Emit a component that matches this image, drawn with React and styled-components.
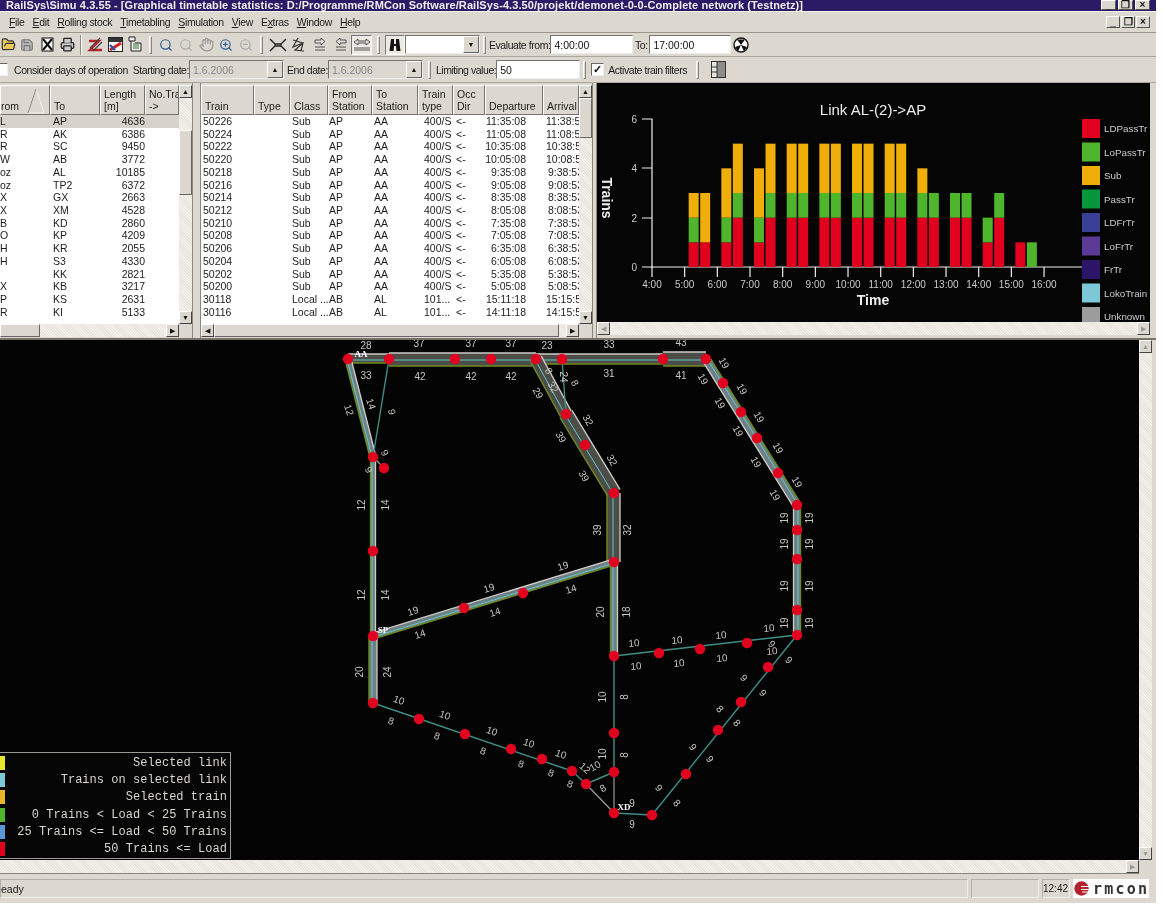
import React from 'react';
import styled, { createGlobalStyle } from 'styled-components';
import { FolderOpen, Save, Printer, Search, ZoomIn, ZoomOut, Hand } from 'lucide-react';

const GlobalStyle = createGlobalStyle`
  html, body { margin: 0; padding: 0; background: #fff; }
  * { box-sizing: border-box; }
`;

const Desktop = styled.div`
  width: 1156px;
  height: 903px;
  display: flex;
  flex-direction: column;
  overflow: hidden;
  background: #dcd8cf;
  color: #1c1c1c;
  font-family: "Liberation Sans", Arial, sans-serif;
  font-size: 10.5px;
  filter: blur(0.35px);
`;

const TitleBar = styled.div`
  height: 11px;
  flex: none;
  display: flex;
  align-items: flex-end;
  justify-content: space-between;
  overflow: hidden;
  background: #2b1a66;
  color: #eee;
  font-weight: 700;
  font-size: 11px;
  letter-spacing: 0.08px;
  white-space: nowrap;
  padding: 0 6px 0 6px;
`;

const WinButtons = styled.div`
  display: flex;
  gap: ${p => (p.$top ? '2px' : '1px')};
  align-self: ${p => (p.$top ? 'flex-start' : 'center')};
`;

const WinBtn = styled.div`
  width: ${p => (p.$top ? '15px' : '14px')};
  height: ${p => (p.$top ? '10px' : '12px')};
  background: #dcd8cf;
  color: #111;
  border: 1px solid;
  border-color: #fff #555 #555 #fff;
  font-size: 10px;
  line-height: ${p => (p.$top ? '8px' : '10px')};
  font-weight: 700;
  text-align: center;
`;

const MenuBar = styled.div`
  height: 22px;
  flex: none;
  display: flex;
  align-items: center;
  justify-content: space-between;
  padding: 0 6px 0 9px;
  border-top: 1px solid #f4f2ec;
  border-bottom: 1px solid #9a968c;
`;

const Menus = styled.div`
  display: flex;
  gap: 8px;
  letter-spacing: -0.35px;
  u { text-decoration: underline; }
`;

const Toolbar = styled.div`
  height: ${p => p.$h}px;
  flex: none;
  display: flex;
  align-items: center;
  white-space: nowrap;
  border-bottom: 1px solid #aaa69c;
`;

const Tool = styled.div`
  width: ${p => p.$w || 20}px;
  height: 20px;
  flex: none;
  display: flex;
  align-items: center;
  justify-content: center;
  ${p => p.$pressed && 'border: 1px solid; border-color: #777 #fff #fff #777; background: #eceae3;'}
`;

const Grip = styled.div`
  width: 3px;
  height: 18px;
  flex: none;
  margin: 0 ${p => p.$m || 5}px;
  border: 1px solid;
  border-color: #fff #8a867c #8a867c #fff;
`;

const Sep = styled.div`
  width: 2px;
  height: 20px;
  flex: none;
  margin: 0 3px;
  border-left: 1px solid #8a867c;
  border-right: 1px solid #fff;
`;

const Label = styled.span`
  flex: none;
  width: ${p => (p.$w ? `${p.$w}px` : 'auto')};
  text-align: ${p => p.$align || 'left'};
  margin-left: ${p => p.$ml || 0}px;
  letter-spacing: -0.45px;
`;

const Field = styled.div`
  width: ${p => p.$w}px;
  height: 19px;
  flex: none;
  display: flex;
  align-items: center;
  justify-content: space-between;
  padding-left: 3px;
  background: ${p => (p.$off ? '#dcd8cf' : '#fff')};
  color: ${p => (p.$off ? '#888' : '#111')};
  border: 1px solid;
  border-color: #77736a #eee #eee #77736a;
`;

const SpinBtn = styled.div`
  width: 16px;
  height: 17px;
  background: #dcd8cf;
  border: 1px solid;
  border-color: #fff #666 #666 #fff;
  color: #111;
  font-size: 7px;
  line-height: 15px;
  text-align: center;
`;

const Check = styled.div`
  width: 13px;
  height: 13px;
  flex: none;
  margin-left: ${p => p.$ml || 0}px;
  background: #fff;
  border: 1px solid;
  border-color: #666 #eee #eee #666;
  color: #111;
  font-size: 11px;
  line-height: 10px;
  font-weight: 700;
  text-align: center;
`;

const Panels = styled.div`
  height: 257px;
  flex: none;
  display: flex;
  border-bottom: 2px solid #77736a;
`;

const Splitter = styled.div`
  width: ${p => p.$w}px;
  flex: none;
  border-left: 1px solid #8a867c;
  border-right: 1px solid #8a867c;
`;

const TablePane = styled.div`
  width: ${p => p.$w}px;
  flex: none;
  display: grid;
  grid-template-columns: 1fr 13px;
  grid-template-rows: 1fr 13px;
  height: 252px;
  margin-top: 2px;
`;

const TableBody = styled.div`
  overflow: hidden;
  background: #fff;
`;

const HeadRow = styled.div`
  display: grid;
  grid-template-columns: ${p => p.$cols};
  height: 30px;
`;

const HeadCell = styled.div`
  display: flex;
  align-items: flex-end;
  position: relative;
  padding: 0 ${p => (p.$flush ? '0' : '3px')} 2px ${p => (p.$flush ? '0' : '3px')};
  line-height: 12px;
  background: #dcd8cf;
  border: 1px solid;
  border-color: #fff #77736a #77736a #fff;
  overflow: hidden;
  white-space: pre-line;
`;

const SortMark = styled.svg`
  position: absolute;
  right: 3px;
  top: 2px;
`;

const Row = styled.div`
  display: grid;
  grid-template-columns: ${p => p.$cols};
  height: 12.73px;
  line-height: 12.73px;
  background: ${p => (p.$sel ? '#d7d3ca' : 'transparent')};
`;

const Cell = styled.div`
  overflow: hidden;
  white-space: nowrap;
  text-align: ${p => p.$align || 'left'};
  padding: ${p => p.$pad || '0 0 0 2px'};
`;

const dither = 'repeating-linear-gradient(45deg, #f2f0ea 0 1px, #e8e5de 1px 2px)';

const ScrollTrack = styled.div`
  display: flex;
  flex-direction: ${p => (p.$h ? 'row' : 'column')};
  justify-content: space-between;
  background-image: ${dither};
  min-width: 0;
  min-height: 0;
`;

const Arrow = styled.div`
  width: 13px;
  height: 13px;
  flex: none;
  background: #dcd8cf;
  border: 1px solid;
  border-color: #fff #444 #444 #fff;
  color: ${p => (p.$dim ? '#999' : '#111')};
  font-size: 7px;
  line-height: 11px;
  text-align: center;
`;

const Thumb = styled.div`
  flex: none;
  width: ${p => p.$w || '100%'};
  height: ${p => p.$len || '100%'};
  margin: ${p => p.$m || 0};
  background: #dcd8cf;
  border: 1px solid;
  border-color: #fff #666 #666 #fff;
`;

const Corner = styled.div`
  background: #dcd8cf;
`;

const ChartPane = styled.div`
  flex: none;
  width: 553px;
  display: flex;
  flex-direction: column;
`;

const ChartCanvas = styled.svg`
  display: block;
  flex: none;
  background: #050505;
`;

const MapRow = styled.div`
  height: 520px;
  flex: none;
  display: flex;
`;

const MapCanvas = styled.div`
  width: 1139px;
  flex: none;
  position: relative;
  background: #040404;
  overflow: hidden;
`;

const MapSvg = styled.svg`
  display: block;
`;

const MapLegend = styled.div`
  position: absolute;
  left: 0;
  bottom: 1px;
  width: 231px;
  height: 107px;
  padding-top: 1px;
  background: #060606;
  border: 1px solid #9c9a94;
  border-left: none;
  display: flex;
  flex-direction: column;
`;

const LegendRow = styled.div`
  height: 17.3px;
  display: flex;
  align-items: center;
  justify-content: space-between;
  padding-right: 3px;
  font-family: "Liberation Mono", "Courier New", monospace;
  font-size: 12px;
  letter-spacing: 0.03px;
  color: #d8d6d0;
  white-space: pre;
`;

const Swatch = styled.div`
  width: 5px;
  height: 14px;
  background: ${p => p.$c};
`;

const BottomScroll = styled.div`
  height: 14px;
  flex: none;
  width: 1139px;
  display: flex;
  justify-content: flex-end;
  background-image: ${dither};
  border-bottom: 1px solid #8a867c;
`;

const StatusBar = styled.div`
  flex: 1;
  display: flex;
  gap: 3px;
  align-items: stretch;
  padding: 5px 7px 5px 0;
`;

const StatusCell = styled.div`
  width: ${p => (p.$w ? `${p.$w}px` : 'auto')};
  flex: ${p => (p.$w ? 'none' : 1)};
  display: flex;
  align-items: center;
  border: 1px solid;
  border-color: #b4b0a6 #f0eee8 #f0eee8 #b4b0a6;
  font-size: ${p => (p.$small ? '10px' : '10.5px')};
`;

const Logo = styled.div`
  width: 76px;
  flex: none;
  background: #fff;
  display: flex;
  align-items: center;
  gap: 3px;
  padding-left: 1px;
`;

const LogoText = styled.span`
  font-family: "DejaVu Sans Mono", monospace;
  font-weight: 700;
  font-size: 15px;
  letter-spacing: 2.2px;
  color: #333;
`;

const leftCols = '50px 50px 45px 34px';
const midCols = '53px 36px 38px 44px 46px 35px 32px 58px 36px';

const leftRows = [
  ['L', 'AP', '4636'], ['R', 'AK', '6386'], ['R', 'SC', '9450'], ['W', 'AB', '3772'],
  ['oz', 'AL', '10185'], ['oz', 'TP2', '6372'], ['X', 'GX', '2663'], ['X', 'XM', '4528'],
  ['B', 'KD', '2860'], ['O', 'KP', '4209'], ['H', 'KR', '2055'], ['H', 'S3', '4330'],
  ['', 'KK', '2821'], ['X', 'KB', '3217'], ['P', 'KS', '2631'], ['R', 'KI', '5133'],
];

const subTrains = [
  ['50226', '11:35:08', '11:38:53'], ['50224', '11:05:08', '11:08:53'],
  ['50222', '10:35:08', '10:38:53'], ['50220', '10:05:08', '10:08:53'],
  ['50218', '9:35:08', '9:38:53'], ['50216', '9:05:08', '9:08:53'],
  ['50214', '8:35:08', '8:38:53'], ['50212', '8:05:08', '8:08:53'],
  ['50210', '7:35:08', '7:38:53'], ['50208', '7:05:08', '7:08:53'],
  ['50206', '6:35:08', '6:38:53'], ['50204', '6:05:08', '6:08:53'],
  ['50202', '5:35:08', '5:38:53'], ['50200', '5:05:08', '5:08:53'],
];

// [red, green, yellow] for the two bars of each hour, from 5:00 on
const hours = [
  [[1, 1, 1], [1, 0, 2]], [[1, 1, 2], [2, 1, 2]], [[1, 1, 2], [2, 1, 2]], [[2, 1, 2], [2, 1, 2]],
  [[2, 1, 2], [2, 1, 2]], [[2, 1, 2], [2, 1, 2]], [[2, 1, 2], [2, 1, 2]], [[2, 1, 1], [2, 1, 0]],
  [[2, 1, 0], [2, 1, 0]], [[1, 1, 0], [2, 1, 0]], [[1, 0, 0], [0, 1, 0]],
];

const legendItems = [
  ['LDPassTr', '#e2001f'], ['LoPassTr', '#4fb52c'], ['Sub', '#efae0a'], ['PassTr', '#07963c'],
  ['LDFrTr', '#3a3f96'], ['LoFrTr', '#5a3a94'], ['FrTr', '#2c1468'], ['LokoTrain', '#7cc8d8'], ['Unknown', '#9c9c9c'],
];

function Chart() {
  const x0 = 55;
  const hw = 32.67;
  const unit = 24.67;
  const base = 184;
  const stack = (vals, x, key) => {
    let y = base;
    return vals.map((v, i) => {
      y -= v * unit;
      return v ? <rect key={key + i} x={x} y={y} width={10} height={v * unit} fill={['#e2001f', '#4fb52c', '#efae0a'][i]} /> : null;
    });
  };
  return (
    <ChartCanvas width={553} height={239} viewBox="0 0 553 239">
      <text x={276} y={32} fill="#eee" fontSize={15} textAnchor="middle" fontFamily="Liberation Sans">Link AL-(2)-&gt;AP</text>
      <text transform="translate(5 115) rotate(90)" fill="#eee" fontSize={14} fontWeight={700} textAnchor="middle" fontFamily="Liberation Sans">Trains</text>
      <text x={276} y={222} fill="#eee" fontSize={14} fontWeight={700} textAnchor="middle" fontFamily="Liberation Sans">Time</text>
      <path d={`M${x0 - 10} 36H${x0}V${base + 1}M${x0 - 10} 85H${x0}M${x0 - 10} 135H${x0}M${x0 - 10} ${base}H${x0 + 430}`} stroke="#eee" strokeWidth={1.2} fill="none" />
      {[[6, 36], [4, 85], [2, 135], [0, 184]].map(([t, y]) => (
        <text key={t} x={x0 - 15} y={y + 4} fill="#ccc" fontSize={10} textAnchor="end" fontFamily="Liberation Sans">{t}</text>
      ))}
      {Array.from({ length: 13 }, (_, i) => (
        <g key={i}>
          <path d={`M${x0 + i * hw} ${base}v10`} stroke="#eee" strokeWidth={1.2} />
          <text x={x0 + i * hw} y={205} fill="#ccc" fontSize={10} textAnchor="middle" fontFamily="Liberation Sans">{i + 4}:00</text>
        </g>
      ))}
      {hours.map((h, i) => (
        <g key={i}>
          {stack(h[0], x0 + (i + 1) * hw + 4, `a${i}`)}
          {stack(h[1], x0 + (i + 1) * hw + 15.5, `b${i}`)}
        </g>
      ))}
      {legendItems.map(([name, c], i) => (
        <g key={name}>
          <rect x={485} y={36 + i * 23.5} width={18} height={19} fill={c} />
          <text x={507} y={49 + i * 23.5} fill="#ccc" fontSize={9.8} fontFamily="Liberation Sans">{name}</text>
        </g>
      ))}
    </ChartCanvas>
  );
}

// lines: from, to, half widths towards "white" side and "olive" side
const thick = [
  [[348, 359], [389, 359], 5, 4], [[389, 359], [536, 359], 6, 7], [[536, 359], [663, 359], 5, 5],
  [[663, 359], [706, 359], 7, 7], [[536, 359], [566, 414], 6, 6], [[566, 414], [614, 493], 7, 7],
  [[614, 493], [614, 562], 6, 7], [[348, 359], [373, 457], 3, 3], [[373, 457], [373, 636], 2.5, 2.5],
  [[373, 636], [614, 562], 3, 3], [[373, 636], [373, 703], 4, 4], [[614, 562], [614, 656], 3.5, 3.5],
  [[797, 505], [706, 359], 4, 4], [[797, 635], [797, 505], 3.5, 3.5],
];

const thin = [
  [[389, 359], [373, 457]], [[562, 359], [566, 414]], [[373, 703], [572, 771]], [[572, 771], [586, 784]],
  [[586, 784], [614, 772]], [[614, 656], [614, 772]], [[614, 813], [652, 815]], [[652, 815], [797, 635]],
  [[614, 656], [797, 635]],
];

const greyThin = [[[614, 772], [614, 813]], [[586, 784], [614, 813]], [[373, 457], [384, 468]]];

const nodes = [
  [348, 359], [389, 359], [455, 359], [491, 359], [536, 359], [562, 359], [663, 359], [706, 359],
  [373, 457], [384, 468], [566, 414], [585, 445], [614, 493], [614, 562], [373, 551], [373, 636],
  [523, 593], [464, 608], [723, 383], [741, 412], [757, 438], [778, 473], [797, 505], [797, 530],
  [797, 559], [797, 610], [797, 635], [373, 703], [419, 719], [465, 734], [511, 749], [542, 759],
  [572, 771], [586, 784], [614, 772], [614, 813], [614, 733], [614, 656], [659, 653], [700, 649],
  [747, 643], [768, 667], [741, 702], [718, 730], [686, 774], [652, 815],
];

const v = -90;
const labels = [
  [366, 345, '28', 0], [419, 343, '37', 0], [471, 343, '37', 0], [511, 343, '37', 0], [547, 345, '23', 0], [609, 344, '33', 0], [681, 342, '43', 0],
  [366, 375, '33', 0], [420, 376, '42', 0], [471, 376, '42', 0], [511, 376, '42', 0], [609, 373, '31', 0], [681, 375, '41', 0],
  [349, 410, '12', 72], [371, 404, '14', 72], [392, 412, '9', 80], [385, 453, '9', 60], [369, 470, '9', 60],
  [361, 505, '12', v], [385, 505, '14', v], [361, 595, '12', v], [385, 595, '14', v],
  [413, 611, '19', -18], [489, 588, '19', -18], [563, 566, '19', -18], [420, 634, '14', -18], [495, 612, '14', -18], [571, 589, '14', -18],
  [359, 672, '20', v], [387, 672, '24', v], [597, 530, '39', v], [627, 530, '32', v], [600, 612, '20', v], [626, 612, '18', v],
  [538, 393, '29', 60], [553, 387, '32', 60], [549, 371, '8', 60], [563, 377, '24', 90], [575, 383, '8', 60], [588, 420, '32', 60], [561, 437, '39', 60], [612, 460, '32', 60], [584, 476, '39', 60],
  [724, 363, '19', 60], [703, 379, '19', 60], [742, 389, '19', 60], [720, 403, '19', 60], [759, 417, '19', 60], [738, 431, '19', 60], [778, 448, '19', 60], [756, 462, '19', 60], [797, 482, '19', 60], [775, 495, '19', 60],
  [784, 518, '19', v], [809, 518, '19', v], [784, 544, '19', v], [809, 544, '19', v], [784, 586, '19', v], [809, 586, '19', v], [784, 623, '19', v], [809, 623, '19', v],
  [399, 700, '10', 20], [445, 715, '10', 20], [492, 731, '10', 20], [529, 743, '10', 20], [561, 754, '10', 20], [585, 768, '12', 40], [595, 766, '10', -30],
  [602, 697, '10', v], [602, 754, '10', v], [624, 697, '8', v], [624, 755, '8', v],
  [391, 721, '8', 20], [437, 736, '8', 20], [483, 751, '8', 20], [521, 764, '8', 20], [551, 773, '8', 20], [570, 784, '8', 20], [603, 788, '8', -30], [632, 803, '9', 0], [632, 824, '9', 0],
  [634, 643, '10', -5], [677, 640, '10', -5], [721, 635, '10', -5], [769, 628, '10', -5], [636, 666, '10', -5], [679, 663, '10', -5], [722, 658, '10', -5], [772, 651, '10', -5],
  [772, 644, '9', 45], [789, 660, '9', 45], [744, 678, '9', 50], [763, 693, '9', 50], [720, 709, '8', 50], [737, 723, '8', 50], [693, 747, '9', 55], [710, 759, '9', 55], [659, 788, '9', 50], [677, 803, '8', 50],
];

const stations = [[361, 357, 'AA'], [383, 633, 'SP'], [624, 810, 'XD']];

function Track({ from, to, up, down }) {
  const dx = to[0] - from[0];
  const dy = to[1] - from[1];
  const len = Math.hypot(dx, dy);
  const nx = dy / len;
  const ny = -dx / len;
  const off = d => ({ x1: from[0] + nx * d, y1: from[1] + ny * d, x2: to[0] + nx * d, y2: to[1] + ny * d });
  const band = (up + down) > 8;
  return (
    <g>
      <line {...off((up - down) / 2)} stroke={band ? '#4c4c48' : '#6f7f86'} strokeWidth={up + down} />
      <line {...off(up)} stroke="#cfcdc8" strokeWidth={1.3} />
      <line {...off(-down)} stroke="#6f8a1e" strokeWidth={1.4} />
      <line {...off(-1)} stroke="#63c8c4" strokeWidth={1} />
    </g>
  );
}

function NetworkMap() {
  return (
    <MapSvg width={1139} height={520} viewBox="0 340 1139 520">
      {thick.map(([a, b, u, d], i) => <Track key={i} from={a} to={b} up={u} down={d} />)}
      {thin.map(([a, b], i) => <line key={i} x1={a[0]} y1={a[1]} x2={b[0]} y2={b[1]} stroke="#3f8f88" strokeWidth={1.4} />)}
      {greyThin.map(([a, b], i) => <line key={i} x1={a[0]} y1={a[1]} x2={b[0]} y2={b[1]} stroke="#a8a6a0" strokeWidth={1.1} />)}
      {labels.map(([x, y, t, r], i) => (
        <text key={i} transform={`translate(${x} ${y}) rotate(${r})`} y={3.5} textAnchor="middle" fill="#c8c6c0" fontSize={10} fontFamily="Liberation Sans">{t}</text>
      ))}
      {nodes.map(([x, y], i) => <circle key={i} cx={x} cy={y} r={5.2} fill="#e2001f" />)}
      {stations.map(([x, y, t]) => (
        <text key={t} x={x} y={y} textAnchor="middle" fill="#fff" fontSize={9} fontWeight={700} fontFamily="Liberation Serif">{t}</text>
      ))}
    </MapSvg>
  );
}

const Xdoc = () => (
  <svg width="15" height="15" viewBox="0 0 15 15"><rect x="2" y="1" width="11" height="13" fill="#fff" stroke="#111" /><path d="M3 2l9 11M12 2L3 13" stroke="#111" strokeWidth="2" /></svg>
);
const Rails = () => (
  <svg width="17" height="17" viewBox="0 0 17 17"><path d="M2 5h10L3 14h12" fill="none" stroke="#b5232a" strokeWidth="2.4" /><path d="M13 2L3 12M15 6L6 15" stroke="#444" strokeWidth="1.2" /></svg>
);
const Schedule = () => (
  <svg width="17" height="17" viewBox="0 0 17 17"><rect x="1.5" y="1.5" width="14" height="14" fill="#fff" stroke="#222" /><rect x="2" y="2" width="13" height="4" fill="#333" /><path d="M3 14L14 7" stroke="#c22" strokeWidth="3" /><path d="M3 9l5 5" stroke="#2a4fb0" strokeWidth="2.4" /></svg>
);
const Pages = () => (
  <svg width="16" height="17" viewBox="0 0 16 17"><path d="M2 1h6v4H2zM4 5v10h10v-8H8" fill="#eee" stroke="#222" /><path d="M6 8h6M6 10h6M6 12h6" stroke="#3a7a3a" /></svg>
);
const Split = () => (
  <svg width="18" height="14" viewBox="0 0 18 14"><path d="M1 1l5 5h6l5-5M1 13l5-5h6l5 5M6 6v2M12 6v2" fill="none" stroke="#222" strokeWidth="1.4" /></svg>
);
const Net = () => (
  <svg width="17" height="16" viewBox="0 0 17 16"><path d="M3 3l10 3-8 7 9 1M8 1l-5 9 10-4-2 8" fill="none" stroke="#333" strokeWidth="1.2" /></svg>
);
const ArrowBars = ({ dir }) => (
  <svg width="12" height="13" viewBox="0 0 12 13"><path d={dir > 0 ? 'M1 2h6V0l4 3.5L7 7V5H1zM1 9h10M1 12h10' : 'M11 2H5V0L1 3.5 5 7V5h6zM1 9h10M1 12h10'} fill="#ddd" stroke="#333" strokeWidth="0.8" /></svg>
);
const Swap = () => (
  <svg width="18" height="13" viewBox="0 0 18 13"><path d="M1 4l4-3v2h8V1l4 3-4 3V5H5v2zM1 10h16M1 12h16" fill="#ddd" stroke="#333" strokeWidth="0.8" /></svg>
);
const Binoculars = () => (
  <svg width="14" height="14" viewBox="0 0 14 14"><path d="M3 1h3v5h2V1h3l1.5 12h-4L8 8H6l-.5 5h-4z" fill="#111" /></svg>
);
const Clockish = () => (
  <svg width="16" height="16" viewBox="0 0 16 16"><circle cx="8" cy="8" r="7" fill="#fff" stroke="#111" strokeWidth="1.4" /><path d="M8 8L4 2.5h8zM8 8l6 2-3 4.5zM8 8l-3 6.5L2 10z" fill="#111" /></svg>
);
const PanelIcon = () => (
  <svg width="15" height="17" viewBox="0 0 15 17"><rect x="0.5" y="0.5" width="14" height="16" fill="#e8e6e0" stroke="#333" /><rect x="6" y="1" width="8" height="15" fill="#8e8c88" /><path d="M6 1v15M1 6h5M1 11h5" stroke="#333" /></svg>
);
const LogoMark = () => (
  <svg width="16" height="15" viewBox="0 0 16 15" style={{ flex: 'none' }}>
    <circle cx="7.5" cy="7.5" r="7.2" fill="#b3222c" />
    <path d="M7 5.5h9M7 8.5h9M8 11h8" stroke="#fff" strokeWidth="1.1" />
  </svg>
);

export default function App() {
  return (
    <>
      <GlobalStyle />
      <Desktop>
        <TitleBar>
          <span>RailSys\Simu 4.3.55 - [Graphical timetable statistics: D:/Programme/RMCon Software/RailSys-4.3.50/projekt/demonet-0-0-Complete network (Testnetz)]</span>
          <WinButtons $top>
            <WinBtn $top>_</WinBtn><WinBtn $top>❐</WinBtn><WinBtn $top>×</WinBtn>
          </WinButtons>
        </TitleBar>

        <MenuBar>
          <Menus>
            <span><u>F</u>ile</span><span><u>E</u>dit</span><span><u>R</u>olling stock</span><span><u>T</u>imetabling</span>
            <span><u>S</u>imulation</span><span><u>V</u>iew</span><span>E<u>x</u>tras</span><span><u>W</u>indow</span><span><u>H</u>elp</span>
          </Menus>
          <WinButtons>
            <WinBtn>_</WinBtn><WinBtn>❐</WinBtn><WinBtn>×</WinBtn>
          </WinButtons>
        </MenuBar>

        <Toolbar $h={24}>
          <Tool $w={17}><FolderOpen size={15} color="#333" fill="#e8c95a" /></Tool>
          <Tool><Save size={14} color="#777" fill="#bbb" /></Tool>
          <Tool><Xdoc /></Tool>
          <Tool><Printer size={15} color="#222" fill="#ccc" /></Tool>
          <Sep />
          <Tool><Rails /></Tool>
          <Tool><Schedule /></Tool>
          <Tool><Pages /></Tool>
          <Grip $m={4} />
          <Tool><Search size={14} color="#2a5a9a" /></Tool>
          <Tool><Search size={14} color="#aaa" /></Tool>
          <Tool><Hand size={15} color="#999" /></Tool>
          <Tool><ZoomIn size={14} color="#2a5a9a" /></Tool>
          <Tool><ZoomOut size={14} color="#aaa" /></Tool>
          <Grip $m={4} />
          <Tool $w={21}><Split /></Tool>
          <Tool $w={21}><Net /></Tool>
          <Tool $w={21}><ArrowBars dir={1} /></Tool>
          <Tool $w={21}><ArrowBars dir={-1} /></Tool>
          <Tool $w={21} $pressed><Swap /></Tool>
          <Grip />
          <Tool $pressed><Binoculars /></Tool>
          <Field $w={75}>
            <span />
            <SpinBtn>▼</SpinBtn>
          </Field>
          <Grip $m={3} />
          <Label>Evaluate from:</Label>
          <Field $w={83}>4:00:00</Field>
          <Label $w={16} $align="center">To:</Label>
          <Field $w={82}>17:00:00</Field>
          <Tool $w={20}><Clockish /></Tool>
        </Toolbar>

        <Toolbar $h={26}>
          <Check $ml={-5} />
          <Label $ml={6}>Consider days of operation</Label>
          <Label $ml={5}>Starting date:</Label>
          <Field $w={95} $off>1.6.2006<SpinBtn>▲</SpinBtn></Field>
          <Label $ml={3}>End date:</Label>
          <Field $w={95} $off>1.6.2006<SpinBtn>▲</SpinBtn></Field>
          <Grip />
          <Label>Limiting value:</Label>
          <Field $w={84}>50</Field>
          <Grip $m={3} />
          <Check $ml={2}>✓</Check>
          <Label $ml={4}>Activate train filters</Label>
          <Grip $m={9} />
          <Tool><PanelIcon /></Tool>
        </Toolbar>

        <Panels>
          <TablePane $w={192}>
            <TableBody>
              <HeadRow $cols={leftCols}>
                <HeadCell $flush>
                  rom
                  <SortMark width="20" height="26" viewBox="0 0 20 26"><path d="M10 1L18 25H2z" fill="none" stroke="#f4f2ec" strokeWidth="1" /><path d="M10 1L2 25" stroke="#8a867c" /></SortMark>
                </HeadCell>
                <HeadCell>To</HeadCell>
                <HeadCell>{'Length\n[m]'}</HeadCell>
                <HeadCell>{'No.Tra\n->'}</HeadCell>
              </HeadRow>
              {leftRows.map((r, i) => (
                <Row key={i} $cols={leftCols} $sel={i === 0}>
                  <Cell $pad="0">{r[0]}</Cell>
                  <Cell $pad="0 0 0 3px">{r[1]}</Cell>
                  <Cell $align="right" $pad="0 0 0 0">{r[2]}</Cell>
                  <Cell />
                </Row>
              ))}
            </TableBody>
            <ScrollTrack>
              <Arrow>▲</Arrow>
              <Thumb $len="65px" $m="32px 0 auto 0" />
              <Arrow>▼</Arrow>
            </ScrollTrack>
            <ScrollTrack $h>
              <Thumb $w="40px" $len="13px" />
              <Arrow>▶</Arrow>
            </ScrollTrack>
            <Corner />
          </TablePane>
          <Splitter $w={9} />
          <TablePane $w={391}>
            <TableBody>
              <HeadRow $cols={midCols}>
                <HeadCell>Train</HeadCell>
                <HeadCell>Type</HeadCell>
                <HeadCell>Class</HeadCell>
                <HeadCell>{'From\nStation'}</HeadCell>
                <HeadCell>{'To\nStation'}</HeadCell>
                <HeadCell>{'Train\ntype'}</HeadCell>
                <HeadCell>{'Occ\nDir'}</HeadCell>
                <HeadCell>Departure</HeadCell>
                <HeadCell>Arrival</HeadCell>
              </HeadRow>
              {subTrains.map(t => (
                <Row key={t[0]} $cols={midCols}>
                  <Cell>{t[0]}</Cell>
                  <Cell />
                  <Cell>Sub</Cell>
                  <Cell $pad="0 0 0 1px">AP</Cell>
                  <Cell $pad="0 0 0 2px">AA</Cell>
                  <Cell $pad="0 0 0 6px">400/S</Cell>
                  <Cell $pad="0 0 0 3px">&lt;-</Cell>
                  <Cell $align="right" $pad="0 17px 0 0">{t[1]}</Cell>
                  <Cell $pad={t[2].length === 8 ? '0 0 0 3px' : '0 0 0 5px'}>{t[2]}</Cell>
                </Row>
              ))}
              {[['30118', '15:11:18', '15:15:53'], ['30116', '14:11:18', '14:15:53']].map(t => (
                <Row key={t[0]} $cols={midCols}>
                  <Cell>{t[0]}</Cell>
                  <Cell />
                  <Cell>Local ...</Cell>
                  <Cell $pad="0 0 0 1px">AB</Cell>
                  <Cell $pad="0 0 0 2px">AL</Cell>
                  <Cell $pad="0 0 0 6px">101...</Cell>
                  <Cell $pad="0 0 0 3px">&lt;-</Cell>
                  <Cell $align="right" $pad="0 17px 0 0">{t[1]}</Cell>
                  <Cell $pad="0 0 0 3px">{t[2]}</Cell>
                </Row>
              ))}
            </TableBody>
            <ScrollTrack>
              <Arrow>▲</Arrow>
              <Thumb $len="40px" $m="0 0 auto 0" />
              <Arrow>▼</Arrow>
            </ScrollTrack>
            <ScrollTrack $h>
              <Arrow>◀</Arrow>
              <Thumb $w="345px" $len="13px" $m="0 auto 0 0" />
              <Arrow>▶</Arrow>
            </ScrollTrack>
            <Corner />
          </TablePane>
          <Splitter $w={5} />
          <ChartPane>
            <Chart />
            <ScrollTrack $h>
              <Arrow $dim>◀</Arrow>
              <Arrow $dim>▶</Arrow>
            </ScrollTrack>
          </ChartPane>
        </Panels>

        <MapRow>
          <MapCanvas>
            <NetworkMap />
            <MapLegend>
              <LegendRow><Swatch $c="#e8e82a" />Selected link</LegendRow>
              <LegendRow><Swatch $c="#7cc8d8" />Trains on selected link</LegendRow>
              <LegendRow><Swatch $c="#e8b428" />Selected train</LegendRow>
              <LegendRow><Swatch $c="#4fb52c" />0 Trains &lt; Load &lt; 25 Trains</LegendRow>
              <LegendRow><Swatch $c="#5a96d8" />25 Trains &lt;= Load &lt; 50 Trains</LegendRow>
              <LegendRow><Swatch $c="#e2001f" />50 Trains &lt;= Load</LegendRow>
            </MapLegend>
          </MapCanvas>
          <ScrollTrack>
            <Arrow $dim>▲</Arrow>
            <Arrow $dim>▼</Arrow>
          </ScrollTrack>
        </MapRow>
        <BottomScroll>
          <Arrow $dim>▶</Arrow>
        </BottomScroll>

        <StatusBar>
          <StatusCell>eady</StatusCell>
          <StatusCell $w={68} />
          <StatusCell $w={28} $small>12:42</StatusCell>
          <Logo><LogoMark /><LogoText>rmcon</LogoText></Logo>
        </StatusBar>
      </Desktop>
    </>
  );
}
